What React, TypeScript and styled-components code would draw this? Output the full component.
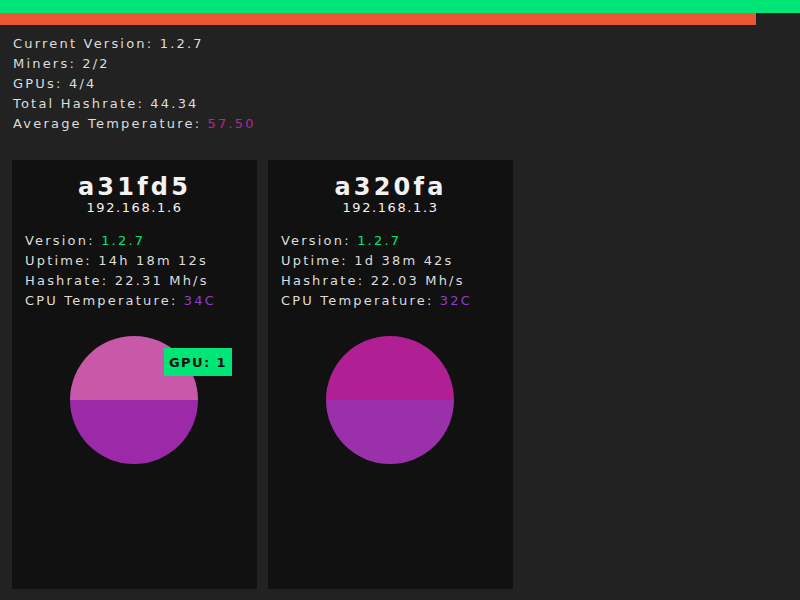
import React from "react";
import styled, { createGlobalStyle } from "styled-components";

const Global = createGlobalStyle`
  html, body {
    margin: 0;
    padding: 0;
    background: #222222;
    font-family: "DejaVu Sans", sans-serif;
  }
`;

const Page = styled.div`
  width: 800px;
  height: 600px;
  display: flex;
  flex-direction: column;
  background: #222222;
  color: #dddddd;
`;

const Bar = styled.div<{ $color: string; $width: string; $height: number }>`
  background: ${(p) => p.$color};
  width: ${(p) => p.$width};
  height: ${(p) => p.$height}px;
`;

const Stats = styled.div`
  padding: 9px 13px 0;
  display: flex;
  flex-direction: column;
`;

const Line = styled.div`
  font-size: 13px;
  line-height: 20px;
  letter-spacing: 2.2px;
  font-weight: 500;
  white-space: nowrap;
`;

const Hl = styled.span<{ $color: string }>`
  color: ${(p) => p.$color};
`;

const Cards = styled.div`
  display: flex;
  gap: 11px;
  padding: 26px 12px 0;
`;

const Card = styled.div`
  width: 245px;
  height: 429px;
  background: #111111;
  padding: 13px 0 0 13px;
  box-sizing: border-box;
  display: flex;
  flex-direction: column;
`;

const Name = styled.div`
  text-align: center;
  padding-right: 13px;
  font-size: 24px;
  line-height: 28px;
  letter-spacing: 3.2px;
  color: #f2f2f2;
  font-weight: bold;
`;

const Ip = styled.div`
  text-align: center;
  padding-right: 13px;
  font-size: 13px;
  line-height: 14px;
  letter-spacing: 1.6px;
  color: #f2f2f2;
  font-weight: 500;
`;

const Info = styled.div`
  margin-top: 16px;
  display: flex;
  flex-direction: column;
`;

const PieWrap = styled.div`
  position: relative;
  width: 128px;
  height: 128px;
  margin: 25px 0 0 45px;
`;

const Tip = styled.div`
  position: absolute;
  left: 94px;
  top: 12px;
  width: 68px;
  height: 28px;
  background: #00e676;
  color: #111111;
  font-size: 13px;
  font-weight: 600;
  letter-spacing: 1.4px;
  display: flex;
  align-items: center;
  justify-content: center;
`;

type Miner = {
  name: string;
  ip: string;
  uptime: string;
  hashrate: string;
  temp: string;
  top: string;
  bottom: string;
  tip?: string;
};

const miners: Miner[] = [
  {
    name: "a31fd5",
    ip: "192.168.1.6",
    uptime: "14h 18m 12s",
    hashrate: "22.31 Mh/s",
    temp: "34C",
    top: "#c858a8",
    bottom: "#9c2aa8",
    tip: "GPU: 1",
  },
  {
    name: "a320fa",
    ip: "192.168.1.3",
    uptime: "1d 38m 42s",
    hashrate: "22.03 Mh/s",
    temp: "32C",
    top: "#b01f94",
    bottom: "#9a30aa",
  },
];

function Pie({ top, bottom, tip }: { top: string; bottom: string; tip?: string }) {
  return (
    <PieWrap>
      <svg width="128" height="128" viewBox="0 0 128 128">
        <path d="M0 64 A64 64 0 0 1 128 64 Z" fill={top} />
        <path d="M0 64 A64 64 0 0 0 128 64 Z" fill={bottom} />
      </svg>
      {tip && <Tip>{tip}</Tip>}
    </PieWrap>
  );
}

export default function App() {
  return (
    <Page>
      <Global />
      <Bar $color="#00e676" $width="100%" $height={13} />
      <Bar $color="#ea5732" $width="756px" $height={12} />
      <Stats>
        <Line>Current Version: 1.2.7</Line>
        <Line>Miners: 2/2</Line>
        <Line>GPUs: 4/4</Line>
        <Line>Total Hashrate: 44.34</Line>
        <Line>
          Average Temperature: <Hl $color="#b0279a">57.50</Hl>
        </Line>
      </Stats>
      <Cards>
        {miners.map((m) => (
          <Card key={m.name}>
            <Name>{m.name}</Name>
            <Ip>{m.ip}</Ip>
            <Info>
              <Line>
                Version: <Hl $color="#00e676">1.2.7</Hl>
              </Line>
              <Line>Uptime: {m.uptime}</Line>
              <Line>Hashrate: {m.hashrate}</Line>
              <Line>
                CPU Temperature: <Hl $color="#8a3fd0">{m.temp}</Hl>
              </Line>
            </Info>
            <Pie top={m.top} bottom={m.bottom} tip={m.tip} />
          </Card>
        ))}
      </Cards>
    </Page>
  );
}
